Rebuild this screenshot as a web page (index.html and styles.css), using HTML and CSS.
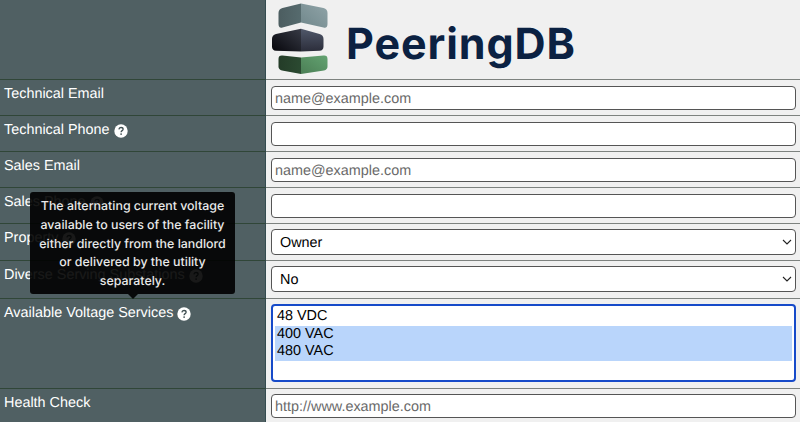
FILE: index.html
```html
<!DOCTYPE html>
<html lang="en">
<head>
<meta charset="utf-8">
<title>PeeringDB</title>
<link rel="stylesheet" href="styles.css">
</head>
<body>
<svg width="0" height="0" class="defs" aria-hidden="true">
  <symbol id="help" viewBox="0 0 14 14">
    <circle cx="7" cy="7" r="6.7" fill="#fff"/>
    <path d="M4.9 5.4C5 4.1 5.9 3.5 7 3.5c1.2 0 2.1.7 2.1 1.7 0 1.5-2 1.4-2 3" fill="none" stroke="#3f4e51" stroke-width="1.3"/>
    <circle cx="7.1" cy="10.1" r=".85" fill="#3f4e51"/>
  </symbol>
  <symbol id="chevron" viewBox="0 0 10 6">
    <path d="M1 1l4 4 4-4" fill="none" stroke="#222" stroke-width="1.1"/>
  </symbol>
</svg>
<main class="form">
  <div class="row brand">
    <div class="label"></div>
    <div class="value">
      <svg class="logo" width="56" height="76" viewBox="0 0 56 76">
        <defs>
          <linearGradient id="a"><stop stop-color="#4c5d60"/><stop offset="1" stop-color="#566b6e"/></linearGradient>
          <linearGradient id="b" x1="1" x2="0" y2="1"><stop stop-color="#90a4a8"/><stop offset="1" stop-color="#70878b"/></linearGradient>
          <linearGradient id="c" y1="1" y2="0"><stop stop-color="#06060b"/><stop offset="1" stop-color="#373a45"/></linearGradient>
          <linearGradient id="d" x2="0" y2="1"><stop stop-color="#50586a"/><stop offset="1" stop-color="#2b2d3a"/></linearGradient>
          <linearGradient id="e"><stop stop-color="#243c28"/><stop offset="1" stop-color="#2b4a31"/></linearGradient>
          <linearGradient id="f" x1="0" y1="1" x2="1" y2="0"><stop stop-color="#4b7e55"/><stop offset="1" stop-color="#63a371"/></linearGradient>
        </defs>
        <path fill="url(#a)" d="M29 3.500L10.500 8q-4 1-4 5v11q0 4.500 4 3.500L29 22.500z"/>
        <path fill="url(#b)" d="M29 3.500L51.500 8q4 1 4 5v11q0 4.500-4 3.500L29 22.500z"/>
        <path fill="url(#c)" d="M29 28.800L4 34q-4 1-4 5v7.500q0 4 4 4.300L29 51.500z"/>
        <path fill="url(#d)" d="M29 28.800L47.500 34q4 1 4 5v7.500q0 4-4 4.300L29 51.500z"/>
        <path fill="url(#e)" d="M29 57.500L10.500 55.600q-4-.4-4 3.400v7.500q0 3 3.500 4L29 74z"/>
        <path fill="url(#f)" d="M29 57.500L51.500 55.600q4-.4 4 3.400v7.500q0 3-3.500 4L29 74z"/>
      </svg>
      <span class="wordmark">PeeringDB</span>
    </div>
  </div>
  <div class="row"><div class="label">Technical Email</div><div class="value"><div class="field hint">name@example.com</div></div></div>
  <div class="row"><div class="label">Technical Phone <svg class="help"><use href="#help"/></svg></div><div class="value"><div class="field"></div></div></div>
  <div class="row"><div class="label">Sales Email</div><div class="value"><div class="field hint">name@example.com</div></div></div>
  <div class="row"><div class="label">Sales Phone <svg class="help"><use href="#help"/></svg></div><div class="value"><div class="field"></div></div></div>
  <div class="row property"><div class="label">Property <svg class="help"><use href="#help"/></svg></div><div class="value"><div class="field select">Owner<svg class="chevron"><use href="#chevron"/></svg></div></div></div>
  <div class="row diverse"><div class="label">Diverse Serving Substations <svg class="help"><use href="#help"/></svg></div><div class="value"><div class="field select">No<svg class="chevron"><use href="#chevron"/></svg></div></div></div>
  <div class="row voltage">
    <div class="label">Available Voltage Services <svg class="help"><use href="#help"/></svg>
      <div class="tooltip">The alternating current voltage<br>available to users of the facility<br>either directly from the landlord<br>or delivered by the utility<br>separately.</div>
    </div>
    <div class="value"><div class="list"><div>48 VDC</div><div class="selected">400 VAC</div><div class="selected">480 VAC</div></div></div>
  </div>
  <div class="row health"><div class="label">Health Check</div><div class="value"><div class="field hint">http://www.example.com</div></div></div>
</main>
</body>
</html>
```
FILE: styles.css
```css
* { box-sizing: border-box; }
body {
  margin: 0;
  height: 422px;
  overflow: hidden;
  background: #f0f0f0;
  font: 14.400px/18px "Liberation Sans", Arial, sans-serif;
  text-rendering: geometricPrecision;
  color: #000;
}
.defs { display: block; }
.row {
  display: grid;
  grid-template-columns: 266px 1fr;
  height: 36px;
}
.label {
  position: relative;
  padding: 5px 4px;
  background: #506063;
  border-right: 1px solid #344c50;
  border-bottom: 1px solid #304638;
  color: #fff;
  white-space: nowrap;
}
.value {
  padding: 6px 4px 0 5px;
  border-bottom: 1px solid #7d827f;
}
.help {
  width: 14px;
  height: 14px;
  vertical-align: -4px;
}
.brand { height: 80px; }
.brand .value {
  display: flex;
  align-items: flex-start;
  padding: 0 0 0 6px;
}
.wordmark {
  margin: 14px 0 0 18px;
  font: 700 43px/60px Inter, sans-serif;
  color: #0b2142;
  letter-spacing: .9px;
}
.field {
  display: flex;
  align-items: center;
  height: 24px;
  padding: 1px 4px 0 3px;
  border: 1px solid #555;
  border-radius: 4px;
  background: #fff;
}
.hint { color: #6a6a6a; }
.property { height: 37px; }
.diverse { height: 38px; }
.property .value, .diverse .value, .health .value { padding-top: 5px; }
.select {
  justify-content: space-between;
  height: 26px;
  padding: 2px 3px 0 8px;
}
.chevron { width: 10px; height: 6px; margin-top: -2px; }
.voltage { height: 90px; }
.list {
  height: 78px;
  padding: 2px 2px;
  border: 2px solid #164ac9;
  border-radius: 4px;
  background: #fff;
  line-height: 17.500px;
}
.voltage .value { padding-top: 5px; }
.list div { padding-left: 2px; }
.selected { background: #b9d5fb; }
.tooltip {
  position: absolute;
  left: 30px;
  bottom: 94px;
  width: 205px;
  height: 102px;
  padding: 5px 0;
  border-radius: 3px;
  background: rgba(0, 0, 0, .9);
  color: #e9e9e9;
  font: 500 12.400px/18.800px Inter, sans-serif;
  text-align: center;
}
.tooltip::after {
  content: "";
  position: absolute;
  left: 98px;
  top: 100%;
  border: 5px solid transparent;
  border-top-color: #080a0a;
  border-bottom: 0;
}
```
